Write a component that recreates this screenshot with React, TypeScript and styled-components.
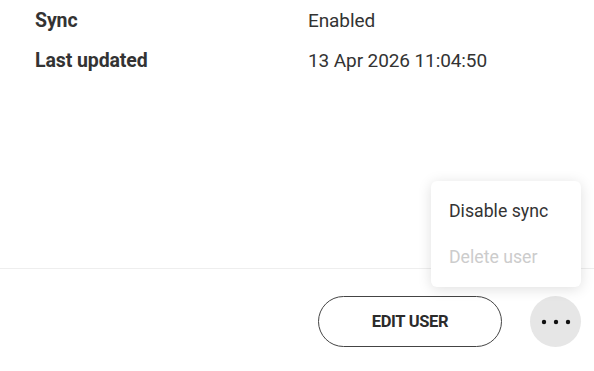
import React from 'react';
import styled, { createGlobalStyle } from 'styled-components';

const textColor = '#333333';

const GlobalStyle = createGlobalStyle`
  html, body {
    margin: 0;
    padding: 0;
    background: #ffffff;
  }
  body {
    font-family: Roboto, 'Noto Sans', sans-serif;
    color: ${textColor};
  }
`;

const Page = styled.div`
  position: relative;
  height: 371px;
  display: flex;
  flex-direction: column;
  overflow: hidden;
`;

const InfoList = styled.dl`
  margin: 0;
  padding: 0 35px;
  flex: 1;
`;

const InfoRow = styled.div`
  display: grid;
  grid-template-columns: 273px 1fr;
  align-items: center;
  height: 40px;
`;

const Label = styled.dt`
  font-size: 19.5px;
  font-weight: 700;
  letter-spacing: -0.1px;
`;

const Value = styled.dd`
  margin: 0;
  font-size: 19px;
  font-weight: 400;
  letter-spacing: -0.1px;
`;

const Divider = styled.hr`
  margin: 0;
  border: none;
  border-top: 1px solid #eeeeee;
`;

const Footer = styled.div`
  display: flex;
  justify-content: flex-end;
  align-items: center;
  gap: 28px;
  padding: 27px 13px 24px 0;
`;

const EditButton = styled.button`
  width: 184px;
  height: 51px;
  border-radius: 26px;
  border: 1px solid #444444;
  background: #ffffff;
  font-family: Roboto, 'Noto Sans', sans-serif;
  font-size: 16.5px;
  font-weight: 700;
  color: #2b2b2b;
  letter-spacing: -0.3px;
  cursor: pointer;
`;

const MoreButton = styled.button`
  width: 51px;
  height: 51px;
  border-radius: 50%;
  border: none;
  background: #e6e6e6;
  display: flex;
  align-items: center;
  justify-content: center;
  padding: 0;
  cursor: pointer;
`;

const Menu = styled.ul`
  position: absolute;
  top: 181px;
  left: 431px;
  width: 150px;
  margin: 0;
  padding: 7px 0;
  list-style: none;
  background: #ffffff;
  border-radius: 6px;
  box-shadow: 0 2px 14px rgba(0, 0, 0, 0.13);
`;

const MenuItem = styled.li<{ disabled?: boolean }>`
  height: 46px;
  display: flex;
  align-items: center;
  padding: 0 18px;
  font-size: 17.7px;
  color: ${(props) => (props.disabled ? '#cccccc' : textColor)};
`;

const Dots = () => (
  <svg width="30" height="6" viewBox="0 0 30 6">
    <circle cx="3" cy="3" r="2.2" fill="#111" />
    <circle cx="15" cy="3" r="2.2" fill="#111" />
    <circle cx="27" cy="3" r="2.2" fill="#111" />
  </svg>
);

export default function App() {
  return (
    <>
      <GlobalStyle />
      <Page>
        <InfoList>
          <InfoRow>
            <Label>Sync</Label>
            <Value>Enabled</Value>
          </InfoRow>
          <InfoRow>
            <Label>Last updated</Label>
            <Value>13 Apr 2026 11:04:50</Value>
          </InfoRow>
        </InfoList>
        <Divider />
        <Footer>
          <EditButton>EDIT USER</EditButton>
          <MoreButton aria-label="More actions">
            <Dots />
          </MoreButton>
        </Footer>
        <Menu>
          <MenuItem>Disable sync</MenuItem>
          <MenuItem disabled>Delete user</MenuItem>
        </Menu>
      </Page>
    </>
  );
}
